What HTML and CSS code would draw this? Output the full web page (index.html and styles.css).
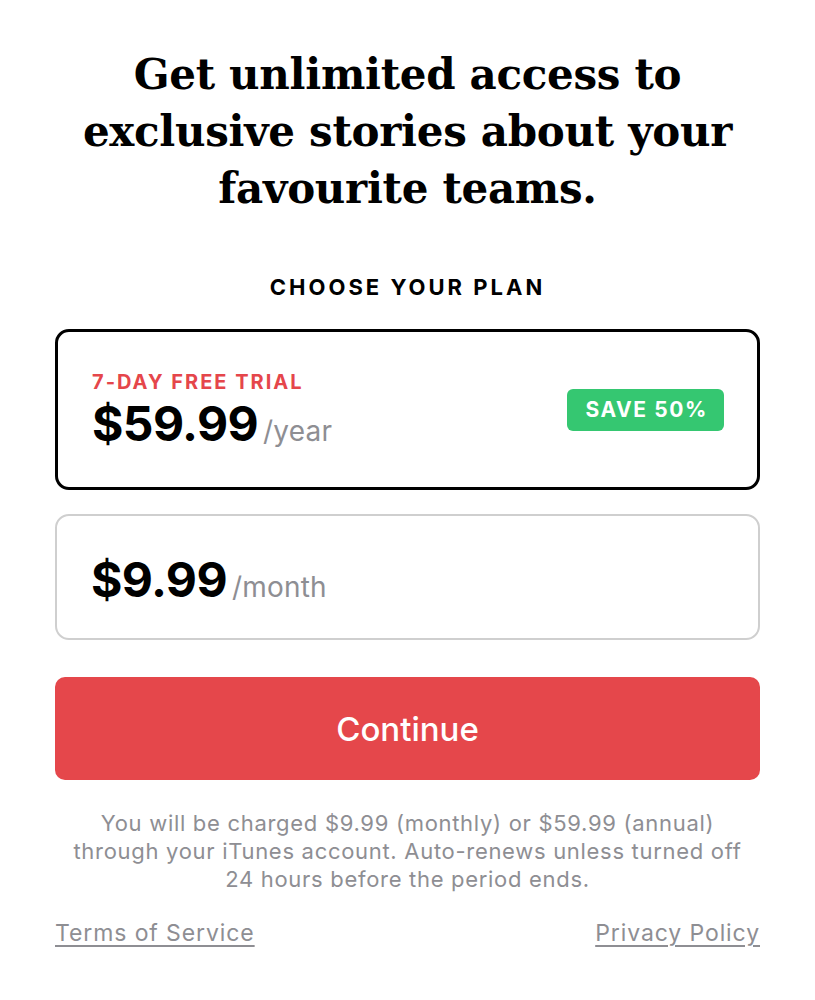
FILE: index.html
```html
<!DOCTYPE html>
<html lang="en">
<head>
<meta charset="UTF-8" />
<meta name="viewport" content="width=device-width, initial-scale=1" />
<title>Choose your plan</title>
<link rel="stylesheet" href="styles.css">
</head>
<body>
  <div class="page">
    <h1 class="headline">Get unlimited access to exclusive stories about your favourite teams.</h1>

    <div class="plan-title">CHOOSE YOUR PLAN</div>

    <div class="plans">
      <!-- YEARLY -->
      <div class="plan selected">
        <div class="plan-info">
          <div class="trial">7-DAY FREE TRIAL</div>
          <div class="price"><span class="amount">$59.99</span><span class="period">/year</span></div>
        </div>
        <div class="badge">SAVE 50%</div>
      </div>

      <!-- MONTHLY -->
      <div class="plan">
        <div class="plan-info">
          <div class="price"><span class="amount">$9.99</span><span class="period">/month</span></div>
        </div>
      </div>
    </div>

    <button class="continue">Continue</button>

    <p class="note">You will be charged $9.99 (monthly) or $59.99 (annual) through your iTunes account. Auto-renews unless turned off 24 hours before the period ends.</p>

    <div class="links">
      <a href="#">Terms of Service</a>
      <a href="#">Privacy Policy</a>
    </div>
  </div>
</body>
</html>
```

FILE: styles.css
```css
html, body {
  margin: 0;
  padding: 0;
  background: #fff;
  color: #000;
  font-family: Inter, 'Noto Sans', sans-serif;
}
.page {
  padding: 46px 55px 0;
  display: flex;
  flex-direction: column;
}
.headline {
  margin: 0 auto;
  max-width: 690px;
  font-family: 'DejaVu Serif', serif;
  font-weight: 700;
  font-size: 42px;
  line-height: 57px;
  text-align: center;
  letter-spacing: -0.3px;
}
.plan-title {
  margin-top: 57px;
  text-align: center;
  font-size: 22px;
  font-weight: 700;
  letter-spacing: 3px;
}
.plans {
  margin-top: 29px;
  display: flex;
  flex-direction: column;
  gap: 24px;
}
.plan {
  display: flex;
  align-items: center;
  justify-content: space-between;
  padding: 0 33px 0 34px;
  height: 122px;
  border: 2px solid #cfcfcf;
  border-radius: 14px;
}
.plan.selected {
  height: 155px;
  border: 3px solid #000;
}
.plan-info {
  margin-top: 4px;
}
.trial {
  color: #e5464b;
  font-size: 20px;
  font-weight: 700;
  letter-spacing: 2px;
}
.price {
  display: flex;
  align-items: baseline;
  gap: 5px;
}
.amount {
  font-size: 48px;
  font-weight: 700;
  letter-spacing: -0.6px;
}
.period {
  font-size: 28px;
  color: #8e8e93;
  font-weight: 400;
  letter-spacing: 0.2px;
}
.badge {
  background: #35c771;
  color: #fff;
  font-size: 21px;
  font-weight: 700;
  letter-spacing: 1.6px;
  padding: 8px 16px 9px 18px;
  border-radius: 6px;
}
.continue {
  margin-top: 37px;
  height: 103px;
  border: none;
  border-radius: 10px;
  background: #e5474b;
  color: #fff;
  font-family: inherit;
  font-size: 33px;
  font-weight: 500;
  cursor: pointer;
}
.note {
  margin: 29px 0 0;
  padding: 0 16px;
  text-align: center;
  color: #8e8e93;
  font-size: 22px;
  line-height: 28px;
  letter-spacing: 0.7px;
}
.links {
  margin-top: 26px;
  display: flex;
  justify-content: space-between;
}
.links a {
  color: #8e8e93;
  font-size: 23px;
  letter-spacing: 0.9px;
  text-decoration: underline;
  text-underline-offset: 4px;
}
```
